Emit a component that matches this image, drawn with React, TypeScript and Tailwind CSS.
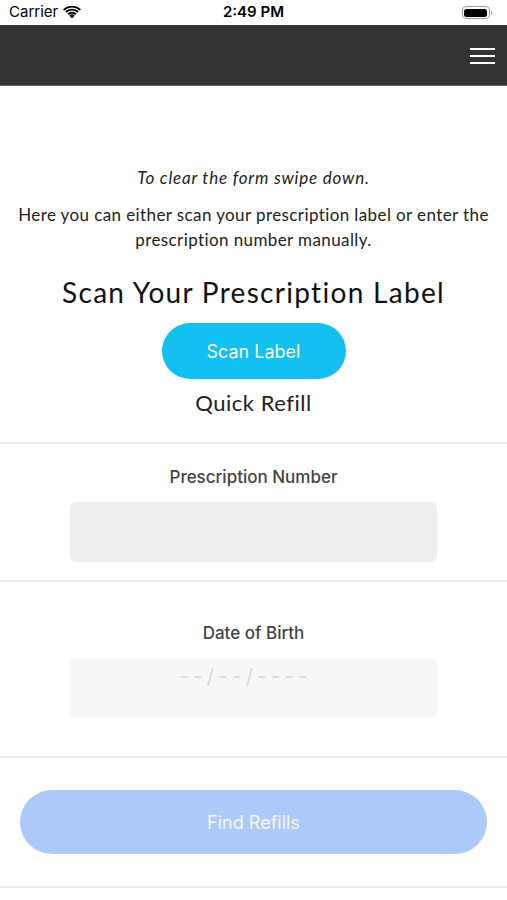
import React from "react";

const raleway = { fontFamily: "Lato, 'Open Sans', sans-serif" };

export default function App() {
  return (
    <div className="w-[507px] h-[900px] bg-white flex flex-col overflow-hidden font-['Inter',sans-serif]">
      {/* status bar */}
      <div className="h-[25px] flex items-center justify-between px-[9px] relative">
        <div className="flex items-center gap-[5px] text-[15px] text-black font-['Inter',sans-serif]">
          <span>Carrier</span>
          <svg width="18" height="13" viewBox="0 0 18 13">
            <path d="M9 12.5 L6.3 9.6 A4 4 0 0 1 11.7 9.6 Z" fill="#000" />
            <path d="M4.4 7.7 A6.6 6.6 0 0 1 13.6 7.7 L12.3 9 A4.8 4.8 0 0 0 5.7 9 Z" fill="#000" />
            <path d="M2.2 5.5 A9.8 9.8 0 0 1 15.8 5.5 L14.5 6.8 A8 8 0 0 0 3.5 6.8 Z" fill="#000" />
            <path d="M0 3.3 A13 13 0 0 1 18 3.3 L16.7 4.6 A11.2 11.2 0 0 0 1.3 4.6 Z" fill="#000" />
          </svg>
        </div>
        <div className="absolute left-0 right-0 text-center text-[15px] font-semibold text-black pointer-events-none">2:49 PM</div>
        <div className="flex items-center mr-[6px]">
          <div className="w-[28px] h-[13px] rounded-[4px] border border-[#999] p-[1.5px]">
            <div className="w-full h-full bg-black rounded-[2.5px]" />
          </div>
          <div className="w-[1.5px] h-[4px] bg-[#999] rounded-r-sm ml-[1px]" />
        </div>
      </div>
      {/* nav bar */}
      <div className="h-[61px] bg-[#333333] flex items-center justify-end pr-[12px] border-b border-[#666]">
        <div className="flex flex-col gap-[5px] w-[25px] mt-[1px]">
          <div className="h-[2px] bg-white" />
          <div className="h-[2px] bg-white" />
          <div className="h-[2px] bg-white" />
        </div>
      </div>

      <div className="flex flex-col items-center text-center" style={raleway}>
        <p className="mt-[81px] italic text-[17px] leading-[22px] tracking-[0.8px] text-[#222]">To clear the form swipe down.</p>
        <p className="mt-[13px] text-[17px] leading-[25px] tracking-[0.4px] text-[#222] px-[10px]">
          Here you can either scan your prescription label or enter the prescription number manually.
        </p>
        <h1 className="mt-[23px] text-[28px] leading-[34px] tracking-[1.3px] text-[#111]">Scan Your Prescription Label</h1>
        <button className="mt-[14px] w-[184px] h-[56px] rounded-full bg-[#12c0f1] text-white text-[18px] font-['Inter',sans-serif]">
          Scan Label
        </button>
        <div className="mt-[10px] text-[22px] leading-[28px] tracking-[0.5px] text-[#222]">Quick Refill</div>
      </div>

      <div className="mt-[25px] h-[2px] bg-[#ebebeb]" />

      <div className="flex flex-col items-center">
        <div className="mt-[22px] text-[17px] leading-[22px] text-[#444] font-medium">Prescription Number</div>
        <div className="mt-[14px] w-[367px] h-[60px] rounded-[6px] bg-[#eeeeee]" />
      </div>

      <div className="mt-[18px] h-[2px] bg-[#ebebeb]" />

      <div className="flex flex-col items-center">
        <div className="mt-[40px] text-[17px] leading-[22px] text-[#444] font-medium">Date of Birth</div>
        <div className="mt-[14px] w-[367px] h-[60px] rounded-[6px] bg-[#f7f7f7] flex justify-center">
          <span className="mt-[6px] mr-[16px] text-[21px] leading-[26px] tracking-[4px] text-[#d9d9d9]">--/--/----</span>
        </div>
      </div>

      <div className="mt-[38px] h-[2px] bg-[#ebebeb]" />

      <div className="px-[20px]">
        <button className="mt-[32px] w-full h-[64px] rounded-full bg-[#adc9f7] text-[#f4f8ff] text-[18px]">
          Find Refills
        </button>
      </div>

      <div className="mt-[32px] h-[2px] bg-[#ebebeb]" />
    </div>
  );
}
